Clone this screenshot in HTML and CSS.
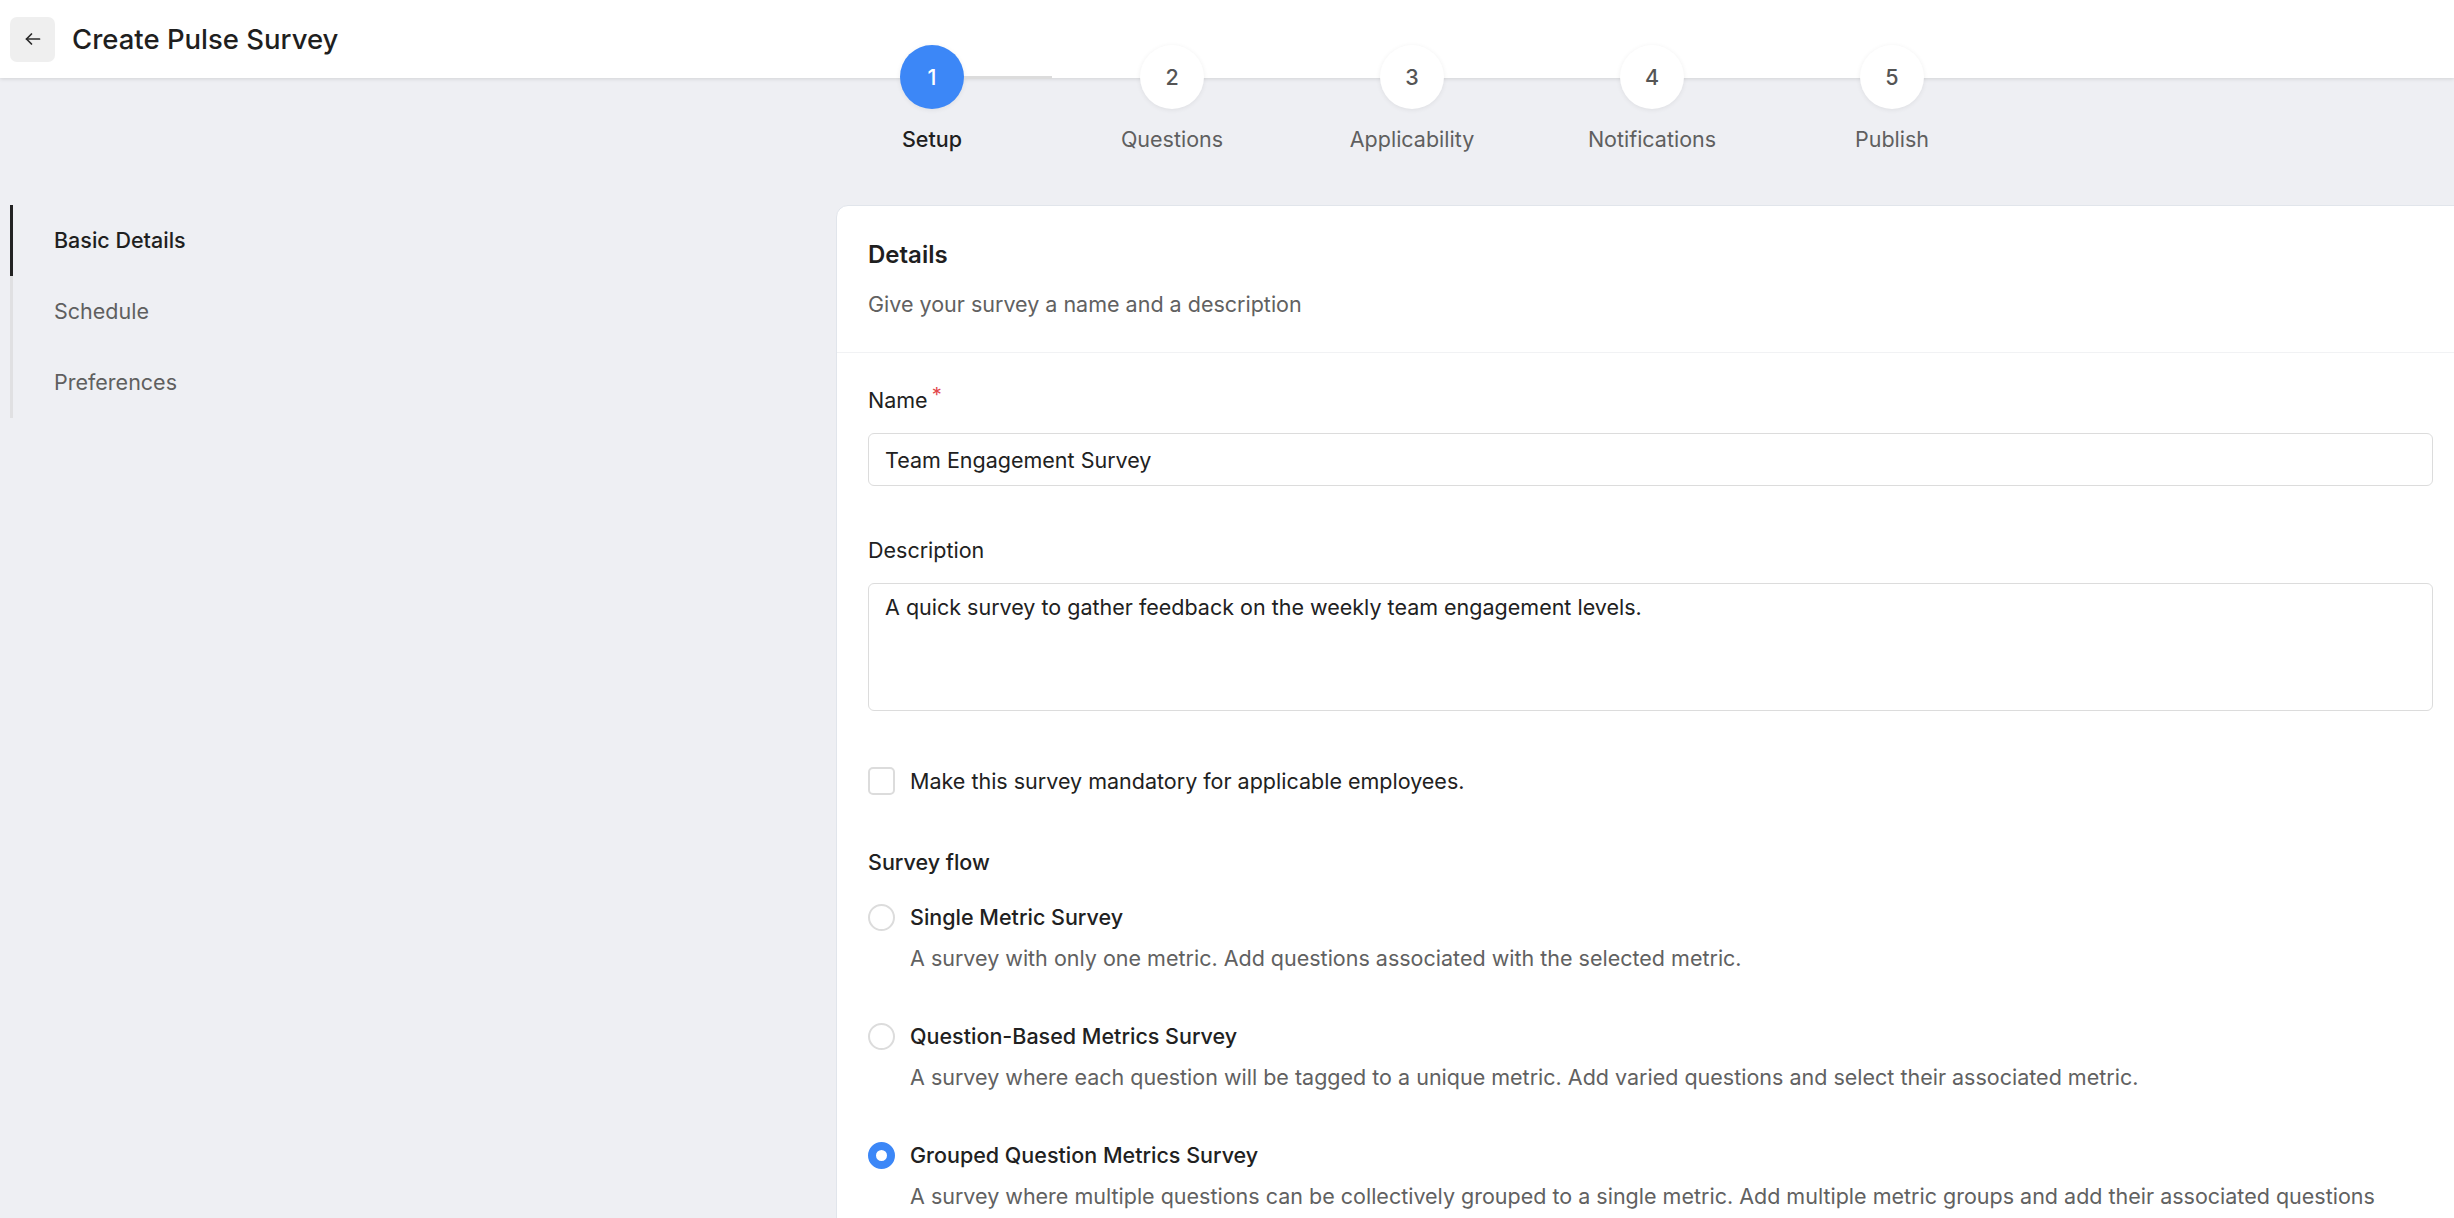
FILE: index.html
```html
<!DOCTYPE html>
<html lang="en">
<head>
    <meta charset="UTF-8">
    <meta name="viewport" content="width=device-width, initial-scale=1.0">
    <title>Create Pulse Survey</title>
    <link rel="stylesheet" href="styles.css">
</head>
<body>

<header class="topbar">
    <button class="back-btn" aria-label="Back">
        <svg width="18" height="18" viewBox="0 0 18 18" fill="none" stroke="#2b2b2b" stroke-width="1.7" stroke-linecap="round" stroke-linejoin="round">
            <path d="M15.5 9H2.5"/>
            <path d="M7.5 4L2.5 9L7.5 14"/>
        </svg>
    </button>
    <h1 class="page-title">Create Pulse Survey</h1>
</header>

<div class="stepper">
    <div class="step active">
        <div class="step-num">1</div>
        <div class="step-label">Setup</div>
    </div>
    <div class="step">
        <div class="step-num">2</div>
        <div class="step-label">Questions</div>
    </div>
    <div class="step">
        <div class="step-num">3</div>
        <div class="step-label">Applicability</div>
    </div>
    <div class="step">
        <div class="step-num">4</div>
        <div class="step-label">Notifications</div>
    </div>
    <div class="step">
        <div class="step-num">5</div>
        <div class="step-label">Publish</div>
    </div>
</div>

<div class="layout">
    <aside class="sidebar">
        <nav class="side-nav">
            <a class="nav-item active">Basic Details</a>
            <a class="nav-item">Schedule</a>
            <a class="nav-item">Preferences</a>
        </nav>
    </aside>

    <section class="card">
        <div class="card-head">
            <h2 class="card-title">Details</h2>
            <p class="card-sub">Give your survey a name and a description</p>
        </div>

        <div class="card-body">
            <div class="field-group">
                <label class="field-label">Name<sup class="req">*</sup></label>
                <input class="field" type="text" value="Team Engagement Survey">
            </div>

            <div class="field-group">
                <label class="field-label">Description</label>
                <textarea class="field area">A quick survey to gather feedback on the weekly team engagement levels.</textarea>
            </div>

            <label class="check-row">
                <input type="checkbox" class="check">
                <span>Make this survey mandatory for applicable employees.</span>
            </label>

            <div class="flow">
                <div class="flow-title">Survey flow</div>

                <label class="option">
                    <input type="radio" name="flow" class="radio">
                    <span class="option-title">Single Metric Survey</span>
                    <span class="option-desc">A survey with only one metric. Add questions associated with the selected metric.</span>
                </label>

                <label class="option">
                    <input type="radio" name="flow" class="radio">
                    <span class="option-title">Question-Based Metrics Survey</span>
                    <span class="option-desc">A survey where each question will be tagged to a unique metric. Add varied questions and select their associated metric.</span>
                </label>

                <label class="option">
                    <input type="radio" name="flow" class="radio" checked>
                    <span class="option-title">Grouped Question Metrics Survey</span>
                    <span class="option-desc">A survey where multiple questions can be collectively grouped to a single metric. Add multiple metric groups and add their associated questions</span>
                </label>
            </div>
        </div>
    </section>
</div>

</body>
</html>
```

FILE: styles.css
```css
body {
    font-family: 'Inter', 'Noto Sans', sans-serif;
    font-size: 21.5px;
    line-height: 30px;
    color: #212121;
    margin: 0;
    background-color: #eeeff3;
    overflow: hidden;
}
.topbar {
    height: 78px;
    background-color: #ffffff;
    display: flex;
    align-items: center;
    gap: 17px;
    padding: 0 10px;
    box-shadow: 0 1px 4px rgba(0, 0, 0, 0.12);
}
.back-btn {
    width: 45px;
    height: 45px;
    border: none;
    border-radius: 7px;
    background-color: #efefef;
    display: flex;
    align-items: center;
    justify-content: center;
    padding: 0;
    cursor: pointer;
}
.page-title {
    margin: 0;
    font-size: 27.5px;
    font-weight: 500;
    color: #1f1f1f;
}

/* stepper sits half over the top bar */
.stepper {
    position: relative;
    display: flex;
    margin: -33px 0 0 812px;
}
.step {
    position: relative;
    width: 240px;
    display: flex;
    flex-direction: column;
    align-items: center;
    gap: 15px;
}
.step-num {
    width: 64px;
    height: 64px;
    border-radius: 50%;
    background-color: #ffffff;
    box-shadow: 0 1px 5px rgba(0, 0, 0, 0.07);
    display: flex;
    align-items: center;
    justify-content: center;
    font-weight: 500;
    color: #555555;
}
.step-label {
    color: #5f5f5f;
}
.step.active .step-num {
    background-color: #3c87f7;
    color: #ffffff;
}
.step.active .step-label {
    color: #1f1f1f;
    font-weight: 500;
}
.step.active::after {
    content: '';
    position: absolute;
    left: 152px;
    right: 0;
    top: 31px;
    height: 3px;
    background-color: #dcdcdc;
}

.layout {
    display: flex;
    margin-top: 51px;
}
.sidebar {
    width: 836px;
    flex-shrink: 0;
}
.side-nav {
    margin-left: 10px;
    border-left: 3px solid #e0e0e2;
    display: flex;
    flex-direction: column;
}
.nav-item {
    padding: 20px 0 21px 41px;
    color: #5f5f5f;
    cursor: pointer;
}
.nav-item.active {
    margin-left: -3px;
    border-left: 3px solid #222222;
    color: #1f1f1f;
    font-weight: 500;
}

.card {
    flex: 1;
    margin-right: -12px;
    background-color: #ffffff;
    border: 1px solid #e1e5eb;
    border-radius: 12px 12px 0 0;
}
.card-head {
    padding: 34px 32px 33px 31px;
    border-bottom: 1px solid #f1f2f4;
}
.card-title {
    margin: 0;
    font-size: 24px;
    font-weight: 600;
    color: #1f1f1f;
}
.card-sub {
    margin: 19px 0 0;
    color: #616161;
}
.card-body {
    padding: 32px 32px 60px 31px;
}
.field-group + .field-group {
    margin-top: 49px;
}
.field-label {
    display: block;
    margin-bottom: 18px;
}
.req {
    color: #e2474c;
    font-size: 20px;
    margin-left: 4px;
    vertical-align: 6px;
    line-height: 0;
}
.field {
    display: block;
    box-sizing: border-box;
    width: 100%;
    height: 53px;
    padding: 0 16px;
    border: 1px solid #dcdcdc;
    border-radius: 6px;
    font-family: inherit;
    font-size: 21.5px;
    color: #212121;
    outline: none;
}
.field.area {
    height: 128px;
    padding: 8px 16px;
    line-height: 30px;
    resize: none;
}

.check-row {
    display: flex;
    align-items: center;
    gap: 15px;
    margin-top: 55px;
}
.check {
    appearance: none;
    box-sizing: border-box;
    width: 27px;
    height: 28px;
    margin: 0;
    border: 2px solid #dcdcdc;
    border-radius: 5px;
    background-color: #ffffff;
}

.flow {
    margin-top: 51px;
}
.flow-title {
    font-weight: 500;
    margin-bottom: 25px;
}
.option {
    display: grid;
    grid-template-columns: 27px 1fr;
    column-gap: 15px;
    row-gap: 11px;
    align-items: center;
}
.option + .option {
    margin-top: 48px;
}
.radio {
    appearance: none;
    box-sizing: border-box;
    width: 27px;
    height: 27px;
    margin: 0;
    border: 2px solid #dcdcdc;
    border-radius: 50%;
    background-color: #ffffff;
}
.radio:checked {
    border: 8px solid #3c87f7;
}
.option-title {
    font-weight: 500;
}
.option-desc {
    grid-column: 2;
    color: #616161;
}
```
